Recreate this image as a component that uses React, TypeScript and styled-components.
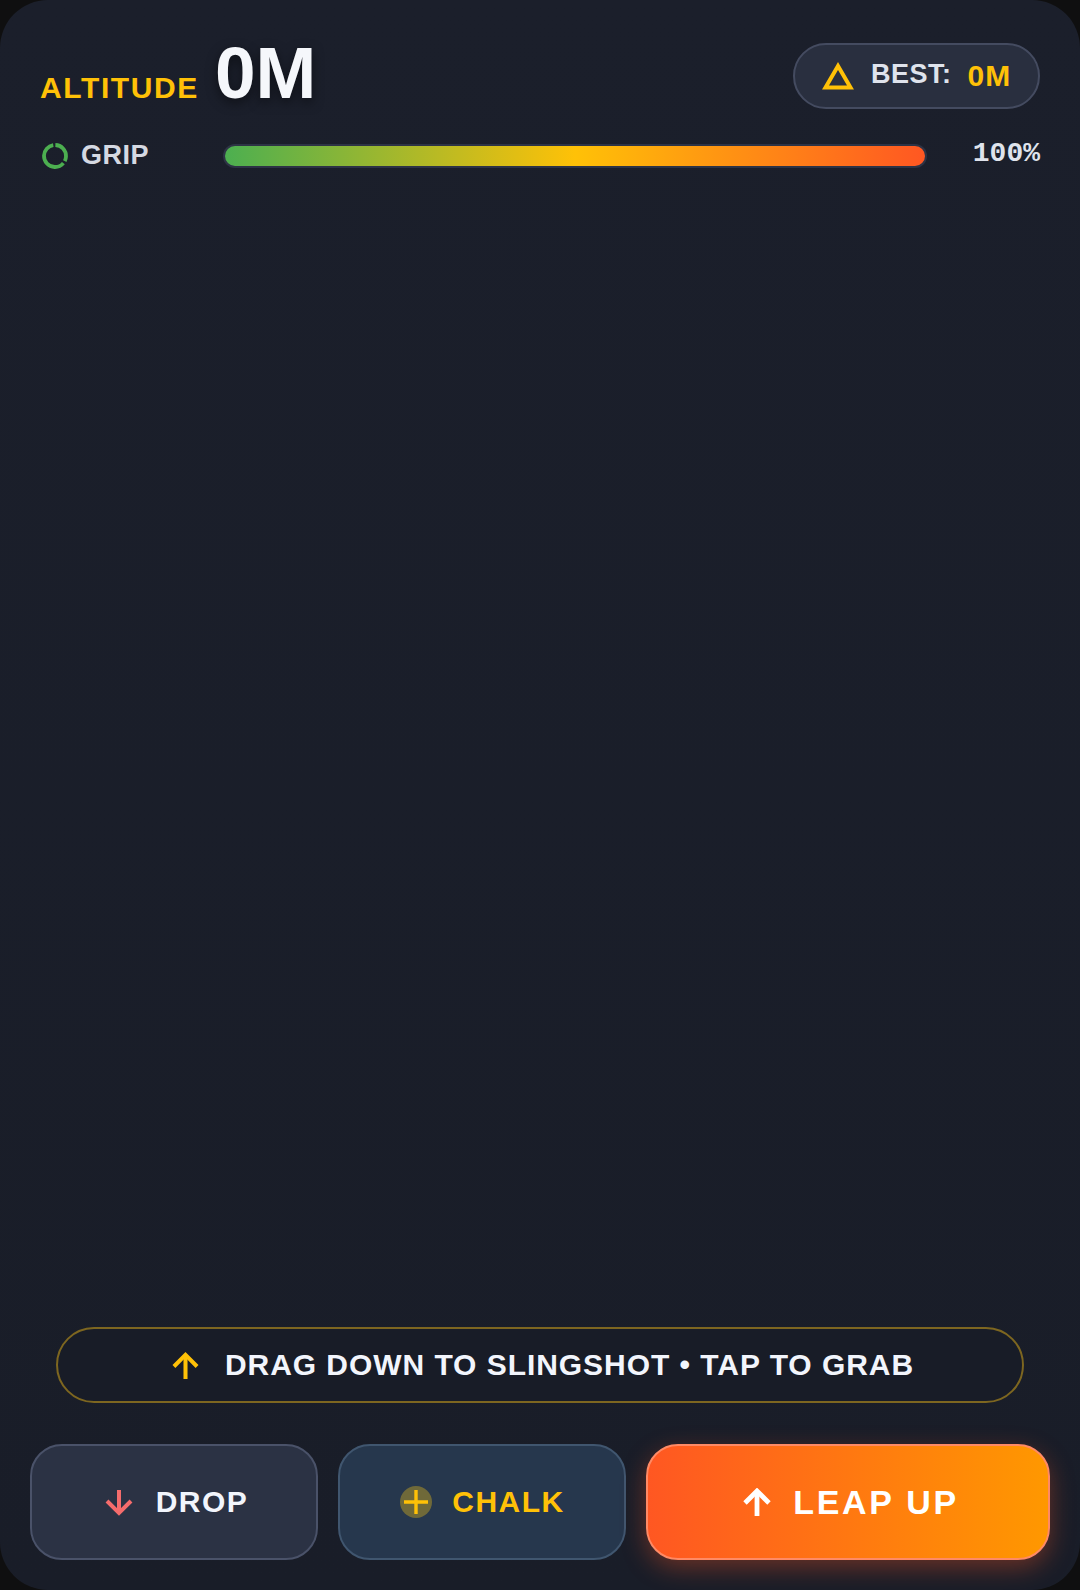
import React from "react";
import styled, { createGlobalStyle, css } from "styled-components";

const GlobalStyle = createGlobalStyle`
  html, body {
    margin: 0;
    padding: 0;
    background: #0f0f10;
  }
  * {
    box-sizing: border-box;
  }
`;

const sans = `"Liberation Sans", Arial, sans-serif`;
const amber = "#ffc107";

const Panel = styled.main`
  width: 1080px;
  height: 1590px;
  display: flex;
  flex-direction: column;
  background: linear-gradient(180deg, #1b1f2b, #191d28);
  border-radius: 48px;
  overflow: hidden;
  font-family: ${sans};
`;

const Header = styled.header`
  display: flex;
  flex-direction: column;
  gap: 23px;
  padding: 28px 40px 0 41px;
`;

const TopRow = styled.div`
  display: flex;
  align-items: center;
  justify-content: space-between;
  height: 90px;
`;

const Altitude = styled.div`
  display: flex;
  align-items: baseline;
  gap: 16px;
`;

const AltitudeLabel = styled.span`
  margin-left: -1px;
  color: ${amber};
  font-size: 30px;
  font-weight: 700;
  letter-spacing: 1.6px;
`;

const AltitudeValue = styled.span`
  color: #f5f7fb;
  font-size: 73px;
  font-weight: 700;
  line-height: 90px;
  text-shadow: 0 4px 12px rgba(0, 0, 0, 0.5);
`;

const BestPill = styled.div`
  display: flex;
  align-items: center;
  width: 247px;
  height: 66px;
  margin-top: 6px;
  padding-left: 27px;
  background: #292f3f;
  border: 2px solid #444b60;
  border-radius: 33px;
`;

const BestLabel = styled.span`
  margin: 0 0 3px 17px;
  color: #dfe3ec;
  font-size: 27px;
  font-weight: 700;
  letter-spacing: 0.5px;
`;

const BestValue = styled.span`
  margin-left: 16px;
  color: ${amber};
  font-size: 30px;
  font-weight: 700;
  letter-spacing: 1px;
`;

const GripRow = styled.div`
  display: flex;
  align-items: center;
  height: 30px;
`;

const GripLabel = styled.span`
  width: 142px;
  margin: 0 0 2px 12px;
  color: #d5d9e2;
  font-size: 27px;
  font-weight: 700;
  letter-spacing: 0.5px;
`;

const GripTrack = styled.div`
  width: 704px;
  height: 24px;
  padding: 2px;
  background: #2d3345;
  border-radius: 12px;
`;

const GripFill = styled.div`
  height: 100%;
  background: linear-gradient(90deg, #4caf50 0%, #ffc107 50%, #ff5722 100%);
  border-radius: 10px;
`;

const GripPercent = styled.span`
  margin-left: auto;
  color: #dfe3ec;
  font-family: "Liberation Mono", monospace;
  font-size: 28px;
  font-weight: 700;
  position: relative;
  top: -3px;
`;

const Spacer = styled.div`
  flex: 1;
`;

const Hint = styled.div`
  display: flex;
  align-items: center;
  justify-content: center;
  gap: 26px;
  height: 76px;
  margin: 0 56px 41px;
  padding-left: 6px;
  background: #181c27;
  border: 2px solid #7d6620;
  border-radius: 38px;
  color: #f2f5fc;
  font-size: 30px;
  font-weight: 700;
  letter-spacing: 0.95px;
`;

const Actions = styled.div`
  display: flex;
  gap: 20px;
  padding: 0 30px 30px;
`;

const variants = {
  drop: css`
    flex: 0 0 288px;
    gap: 23px;
    padding-left: 5px;
    background: #2b3244;
    border: 2px solid #4a5269;
    color: #f2f5fc;
    font-size: 30px;
    letter-spacing: 1.5px;
  `,
  chalk: css`
    flex: 0 0 288px;
    gap: 20px;
    padding-left: 1px;
    background: #26374d;
    border: 2px solid #40566f;
    color: ${amber};
    font-size: 30px;
    letter-spacing: 1.5px;
  `,
  leap: css`
    flex: 1;
    gap: 22px;
    padding-left: 6px;
    background: linear-gradient(90deg, #ff5722, #ff9800);
    border: 2px solid #ff8a65;
    color: #ffffff;
    font-size: 34px;
    letter-spacing: 2.7px;
    box-shadow: 0 8px 24px rgba(255, 87, 34, 0.35);
  `,
};

type Variant = keyof typeof variants;

const ActionButton = styled.button<{ $variant: Variant }>`
  display: flex;
  align-items: center;
  justify-content: center;
  height: 116px;
  padding: 0;
  border-radius: 32px;
  font-family: ${sans};
  font-weight: 700;
  ${({ $variant }) => variants[$variant]}
`;

const Icon = styled.svg<{ $size: number }>`
  width: ${({ $size }) => $size}px;
  height: ${({ $size }) => $size}px;
  flex: none;
`;

const ChalkDot = styled.span`
  display: flex;
  align-items: center;
  justify-content: center;
  width: 32px;
  height: 32px;
  border-radius: 50%;
  background: #6f6939;
`;

const ArrowUp: React.FC<{ color: string; size: number; weight: number }> = ({ color, size, weight }) => (
  <Icon $size={size} viewBox="0 0 28 28" fill="none" stroke={color} strokeWidth={weight}>
    <path d="M14 28V3" />
    <path d="M2 15 14 3l12 12" />
  </Icon>
);

const App: React.FC = () => (
  <>
    <GlobalStyle />
    <Panel>
      <Header>
        <TopRow>
          <Altitude>
            <AltitudeLabel>ALTITUDE</AltitudeLabel>
            <AltitudeValue>0M</AltitudeValue>
          </Altitude>
          <BestPill>
            <Icon $size={32} viewBox="0 0 32 32" fill="none" stroke={amber} strokeWidth="4">
              <path d="M16 6 3.5 27.5h25z" />
            </Icon>
            <BestLabel>BEST:</BestLabel>
            <BestValue>0M</BestValue>
          </BestPill>
        </TopRow>
        <GripRow>
          <Icon $size={28} viewBox="0 0 28 28" fill="none" stroke="#4caf50" strokeWidth="3.8">
            <circle cx="14" cy="14" r="11" strokeDasharray="22 2.5 42 2.5" transform="rotate(-88 14 14)" />
          </Icon>
          <GripLabel>GRIP</GripLabel>
          <GripTrack>
            <GripFill />
          </GripTrack>
          <GripPercent>100%</GripPercent>
        </GripRow>
      </Header>
      <Spacer />
      <Hint>
        <ArrowUp color={amber} size={27} weight={4.2} />
        <span>DRAG DOWN TO SLINGSHOT • TAP TO GRAB</span>
      </Hint>
      <Actions>
        <ActionButton $variant="drop">
          <Icon $size={28} viewBox="0 0 28 28" fill="none" stroke="#f56c6c" strokeWidth="4">
            <path d="M14 2v23" />
            <path d="M2 13 14 25l12-12" />
          </Icon>
          <span>DROP</span>
        </ActionButton>
        <ActionButton $variant="chalk">
          <ChalkDot>
            <Icon $size={26} viewBox="0 0 26 26" fill="none" stroke={amber} strokeWidth="3.4">
              <path d="M13 1v24M1 13h24" />
            </Icon>
          </ChalkDot>
          <span>CHALK</span>
        </ActionButton>
        <ActionButton $variant="leap">
          <ArrowUp color="#ffffff" size={28} weight={4.8} />
          <span>LEAP UP</span>
        </ActionButton>
      </Actions>
    </Panel>
  </>
);

export default App;
